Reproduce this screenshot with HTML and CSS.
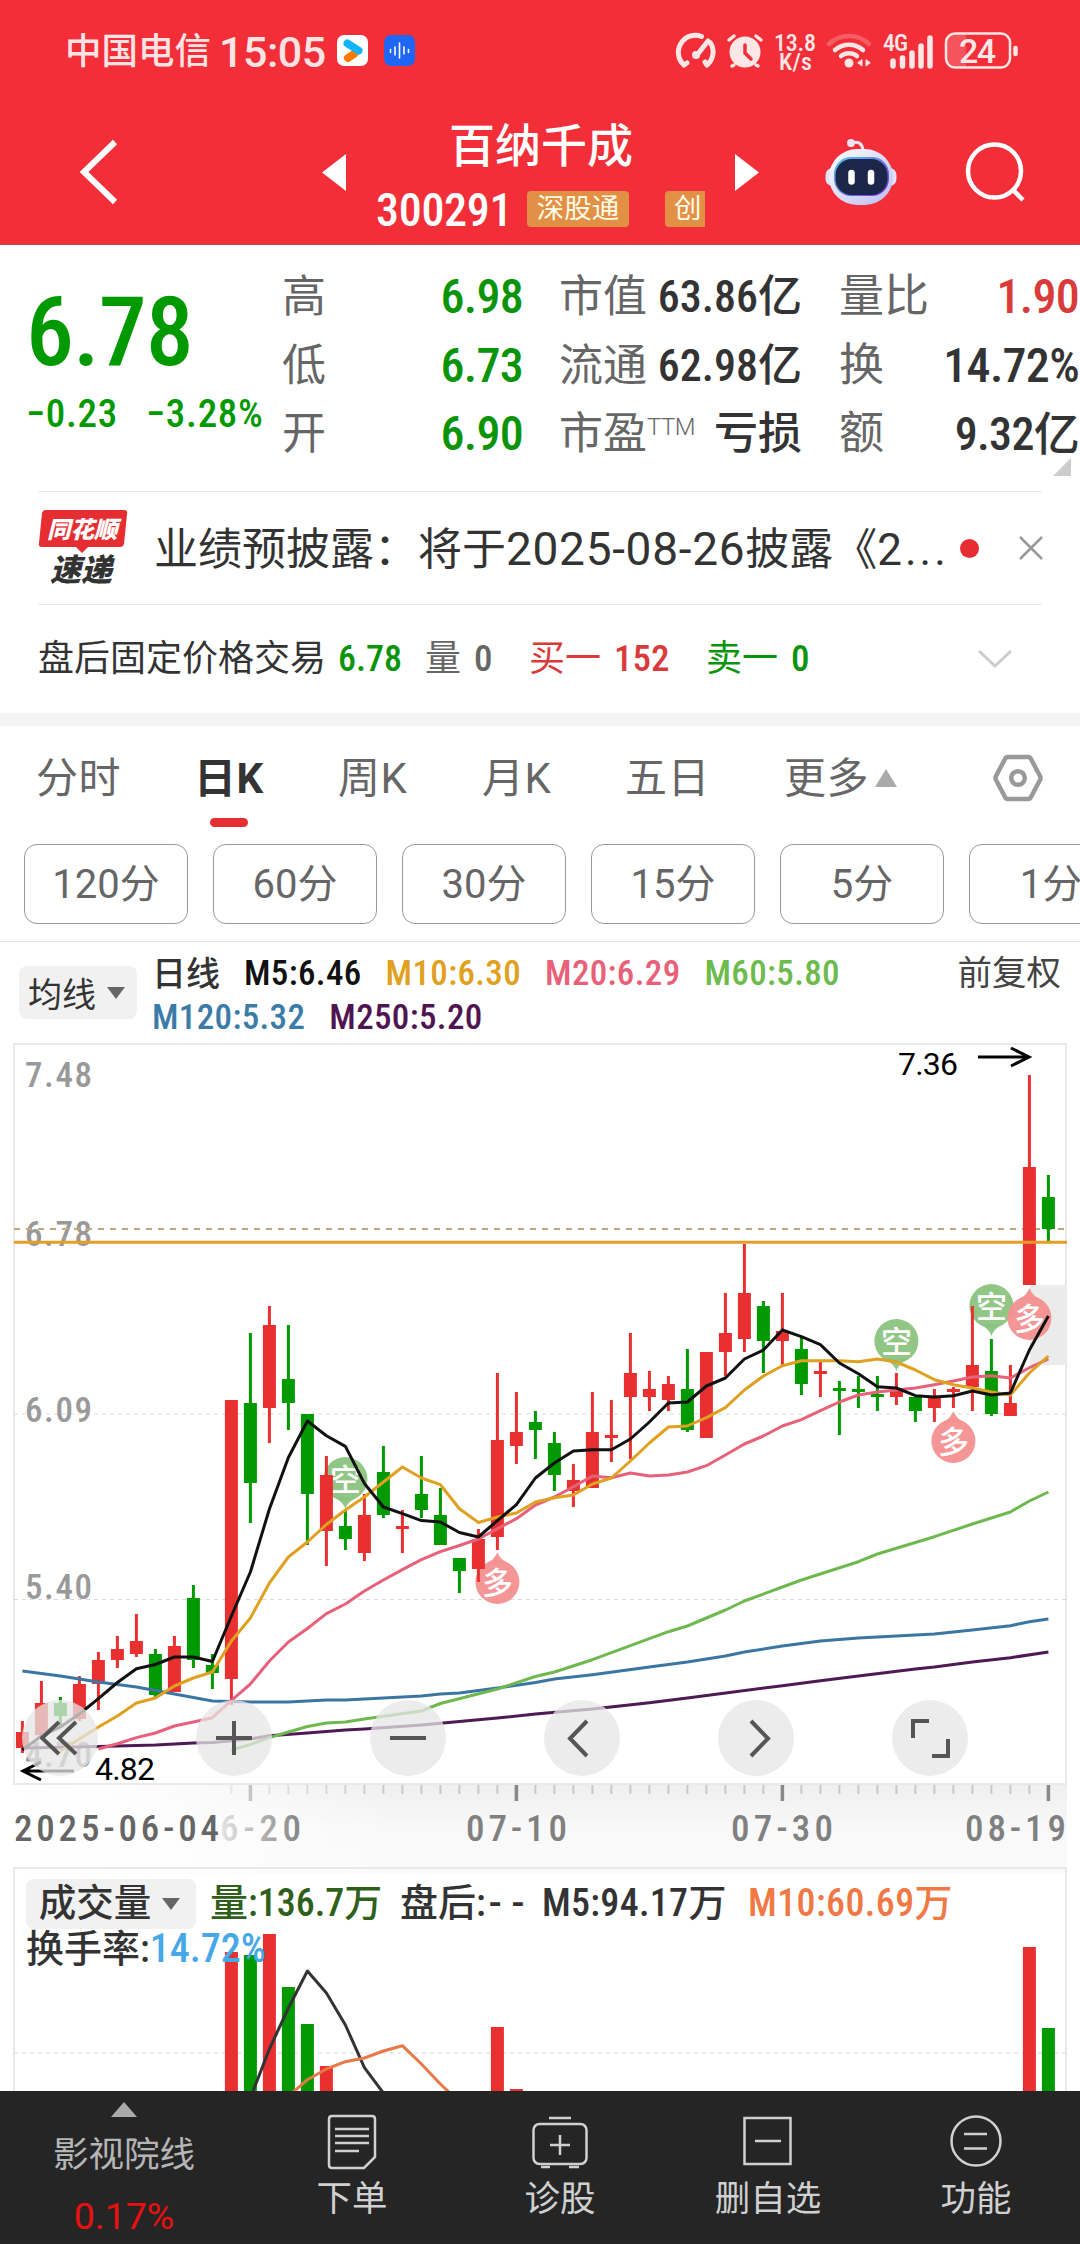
FILE: index.html
```html
<!DOCTYPE html>
<html lang="zh-CN">
<head>
    <meta charset="UTF-8">
    <meta name="viewport" content="width=device-width, initial-scale=1.0">
    <title>百纳千成 300291</title>
    <link rel="stylesheet" href="styles.css">
</head>
<body>
    <!-- Header -->
    <header class="header">
        <div class="status-bar">
            <span class="carrier">中国电信</span>
            <span class="clock">15:05</span>
            <svg class="app-icon" width="31" height="31" viewBox="0 0 31 31">
                <rect width="31" height="31" rx="7" fill="#fff"/>
                <path d="M11 23L17 19" stroke="#ff7a00" stroke-width="8" stroke-linecap="round"/>
                <path d="M10.500 8.500L21.500 15.500" stroke="#12b4fb" stroke-width="8" stroke-linecap="round"/>
            </svg>
            <svg class="app-icon" width="31" height="31" viewBox="0 0 31 31">
                <rect width="31" height="31" rx="7" fill="#1f66f5"/>
                <path d="M6.500 14.500v3M11 12v8M15.500 8v15M20 12v7M24.500 14.500v3" stroke="#fff" stroke-width="1.600" stroke-linecap="round"/>
            </svg>
            <svg class="status-icons" width="360" height="44" viewBox="670 28 360 44" fill="none" stroke="#fde6e6" stroke-width="5" stroke-linecap="round">
                <path d="M684 65A17 17 0 0 1 701.500 36.500M710.500 43A17 17 0 0 1 707 65M684 65l3-2M707 65l-2-3"/>
                <path d="M697 55L708 41"/>
                <circle cx="696" cy="55" r="4" fill="#fde6e6" stroke="none"/>
                <circle cx="745" cy="52" r="15.500" fill="#fde6e6" stroke="none"/>
                <path d="M729 40l5-4M761 40l-5-4M734 65l-2 1M756 65l2 1" stroke-width="3.500"/>
                <path d="M745 45v8l6 6" stroke="#f22f38" stroke-width="3.500"/>
                <text class="speed" x="774" y="51" textLength="42">13.8</text>
                <text class="speed" x="779" y="70" textLength="33">K/s</text>
                <path d="M829 44A29 29 0 0 1 869 44" stroke-opacity=".25" stroke-width="4.500"/>
                <path d="M835 50A21 21 0 0 1 863 50M841 56A13 13 0 0 1 857 56" stroke-width="4.500"/>
                <circle cx="849" cy="63" r="4.500" fill="#fde6e6" stroke="none"/>
                <path d="M862 60v6l-4-3zM866 60v6l4-3z" fill="#fde6e6" stroke-width="1"/>
                <text class="speed" x="883" y="51" textLength="25">4G</text>
                <path d="M893 61v5M902.500 58v8M912 53v13M921 46v20M930 38v28" stroke-width="5.500"/>
                <path d="M966 33.500v34h-11a9 9 0 0 1-9-9v-16a9 9 0 0 1 9-9z" fill="#fff" fill-opacity=".18" stroke="none"/>
                <rect x="946" y="33.500" width="64" height="34" rx="9" stroke-width="2.500"/>
                <path d="M1015.500 48v6" stroke-width="4.500"/>
                <text class="battery" x="959" y="63" textLength="37">24</text>
            </svg>
        </div>
        <div class="nav">
            <svg class="back" width="46" height="70" viewBox="76 136 46 70">
                <path d="M115 141L84 171L115 201" fill="none" stroke="#fff" stroke-width="6"/>
            </svg>
            <svg class="prev" width="24" height="37" viewBox="0 0 24 37"><path d="M24 0v37L0 18.500z" fill="#fff"/></svg>
            <div class="stock">
                <h1 class="stock-name">百纳千成</h1>
                <div class="stock-code">
                    <span class="code">300291</span>
                    <span class="tag">深股通</span>
                    <span class="tag tag-cut">创</span>
                </div>
            </div>
            <svg class="next" width="24" height="37" viewBox="0 0 24 37"><path d="M0 0v37L24 18.500z" fill="#fff"/></svg>
            <svg class="robot" width="74" height="70" viewBox="824 135 74 70">
                <defs>
                    <linearGradient id="shell" x1="0" y1="0" x2="1" y2="1">
                        <stop offset="0" stop-color="#fff"/>
                        <stop offset="1" stop-color="#b9bdf2"/>
                    </linearGradient>
                    <linearGradient id="visor" x1="0" y1="0" x2="1" y2="1">
                        <stop offset="0" stop-color="#53c8f0"/>
                        <stop offset="1" stop-color="#7a2ee0"/>
                    </linearGradient>
                </defs>
                <path d="M852 141c6-2 10 0 11 7" fill="none" stroke="#f3e3ef" stroke-width="3"/>
                <circle cx="851" cy="141" r="4" fill="#f3e3f3"/>
                <rect x="825.500" y="166" width="71" height="18" rx="7" fill="#dfe2fa"/>
                <rect x="829" y="147" width="64" height="56" rx="28" fill="url(#shell)"/>
                <rect x="834" y="155" width="55" height="39" rx="17" fill="url(#visor)"/>
                <rect x="835.500" y="157" width="52" height="36" rx="16" fill="#1c2648"/>
                <path d="M851.500 171v8.500M871 171v8.500" stroke="#fff" stroke-width="6.500" stroke-linecap="round"/>
            </svg>
            <svg class="search" width="64" height="64" viewBox="964 141 64 64" fill="none" stroke="#fff" stroke-width="4.500">
                <circle cx="994.500" cy="172" r="26.500"/>
                <path d="M1012 190L1023 201"/>
            </svg>
        </div>
    </header>

    <!-- Quote -->
    <section class="quote">
        <div class="price-box">
            <div class="price">6.78</div>
            <div class="change"><span>−0.23</span><span>−3.28%</span></div>
        </div>
        <dl class="stats stats-a">
            <dt>高</dt><dd class="down">6.98</dd>
            <dt>低</dt><dd class="down">6.73</dd>
            <dt>开</dt><dd class="down">6.90</dd>
        </dl>
        <dl class="stats stats-b">
            <dt>市值</dt><dd>63.86亿</dd>
            <dt>流通</dt><dd>62.98亿</dd>
            <dt>市盈<sup>TTM</sup></dt><dd>亏损</dd>
        </dl>
        <dl class="stats stats-c">
            <dt>量比</dt><dd class="up">1.90</dd>
            <dt>换</dt><dd>14.72%</dd>
            <dt>额</dt><dd>9.32亿</dd>
        </dl>
        <span class="corner"></span>
    </section>

    <!-- News -->
    <section class="news">
        <div class="news-logo">
            <svg width="90" height="46" viewBox="38 510 90 46">
                <path d="M46 511H124q4 0 3 4L124 545q-1 3-4 3H88L82 554L76 548H42q-4 0-3-4L42 514q1-3 4-3z" fill="#e62e32"/>
                <text class="logo-top" x="47" y="539">同花顺</text>
            </svg>
            <span class="logo-bottom">速递</span>
        </div>
        <div class="news-text">业绩预披露：将于<span class="news-date">2025-08-26</span>披露《<span class="news-cut">2...</span></div>
        <span class="dot"></span>
        <svg class="close" width="24" height="24" viewBox="0 0 24 24"><path d="M1 1L23 23M23 1L1 23" stroke="#999" stroke-width="2.500"/></svg>
    </section>

    <section class="after-hours">
        <span class="ah-title">盘后固定价格交易</span>
        <span class="ah-price num down">6.78</span>
        <span class="ah-vol">量 <b class="num">0</b></span>
        <span class="ah-buy up">买一 <b class="num">152</b></span>
        <span class="ah-sell down">卖一 <b class="num">0</b></span>
        <svg class="expand" width="36" height="20" viewBox="0 0 36 20"><path d="M2 2L18 17L34 2" fill="none" stroke="#ccc" stroke-width="3"/></svg>
    </section>

    <!-- Period tabs -->
    <nav class="tabs">
        <span class="tab">分时</span>
        <span class="tab active">日K</span>
        <span class="tab">周K</span>
        <span class="tab">月K</span>
        <span class="tab">五日</span>
        <span class="tab">更多<i class="tri-up"></i></span>
        <svg class="settings" width="50" height="48" viewBox="0 0 50 48" fill="none" stroke="#999" stroke-width="4.500" stroke-linejoin="round">
            <path d="M15 3H35Q37 3 38 5L47 22Q48 24 47 26L38 43Q37 45 35 45H15Q13 45 12 43L3 26Q2 24 3 22L12 5Q13 3 15 3z"/>
            <circle cx="25" cy="24" r="6.800"/>
        </svg>
    </nav>
    <div class="chips">
        <span class="chip">120分</span>
        <span class="chip">60分</span>
        <span class="chip">30分</span>
        <span class="chip">15分</span>
        <span class="chip">5分</span>
        <span class="chip">1分</span>
    </div>

    <!-- Moving averages -->
    <section class="legend">
        <button class="pick">均线<i class="tri-down"></i></button>
        <div class="ma-list">
            <span class="ma-name">日线</span>
            <span class="ma5">M5:6.46</span>
            <span class="ma10">M10:6.30</span>
            <span class="ma20">M20:6.29</span>
            <span class="ma60">M60:5.80</span>
            <span class="ma120">M120:5.32</span>
            <span class="ma250">M250:5.20</span>
        </div>
        <span class="adjust">前复权</span>
    </section>

    <!-- Charts, drawn by chart.js -->
    <main class="charts">
        <svg id="chart" width="1080" height="1051" viewBox="0 1040 1080 1051"></svg>
        <div class="chart-tools">
            <button class="tool"><svg width="40" height="40" viewBox="0 0 40 40"><path d="M19 4L2 20L19 36M36 4L19 20L36 36"/></svg></button>
            <button class="tool"><svg width="40" height="40" viewBox="0 0 40 40"><path d="M2 20H38M20 3V37"/></svg></button>
            <button class="tool"><svg width="40" height="40" viewBox="0 0 40 40"><path d="M2 20H38"/></svg></button>
            <button class="tool"><svg width="40" height="40" viewBox="0 0 40 40"><path d="M25 3L8 20.500L25 38"/></svg></button>
            <button class="tool"><svg width="40" height="40" viewBox="0 0 40 40"><path d="M15 3L32 20.500L15 38"/></svg></button>
            <button class="tool"><svg width="40" height="40" viewBox="0 0 40 40"><path d="M3 20V3H19M38 21V38H22"/></svg></button>
        </div>
        <div class="vol-legend">
            <button class="pick">成交量<i class="tri-down"></i></button>
            <span class="vol-now">量:136.7万</span>
            <span class="vol-after">盘后:<span class="dashes">--</span></span>
            <span class="vol-m5">M5:94.17万</span>
            <span class="vol-m10">M10:60.69万</span>
        </div>
        <div class="turnover">换手率:<span>14.72%</span></div>
    </main>

    <!-- Bottom bar -->
    <footer class="bottom-bar">
        <div class="sector">
            <i class="tri-up"></i>
            <span class="sector-name">影视院线</span>
            <span class="sector-pct">0.17%</span>
        </div>
        <div class="item">
            <svg width="56" height="58" viewBox="0 0 56 58">
                <path d="M8 2H48Q51 2 51 5V43L40 54H8Q5 54 5 51V5Q5 2 8 2z"/>
                <path d="M11 15H45M11 22H45M11 29H45M11 37H35"/>
            </svg>
            <span>下单</span>
        </div>
        <div class="item">
            <svg width="56" height="58" viewBox="0 0 56 58">
                <rect x="1.500" y="10" width="53" height="40" rx="6"/>
                <path d="M17 4H39M9 53H18M37 53H47M28 21V41M18 31H38"/>
            </svg>
            <span>诊股</span>
        </div>
        <div class="item">
            <svg width="56" height="58" viewBox="0 0 56 58">
                <rect x="4.500" y="4" width="46" height="46"/>
                <path d="M15 27H41"/>
            </svg>
            <span>删自选</span>
        </div>
        <div class="item">
            <svg width="56" height="58" viewBox="0 0 56 58">
                <circle cx="28" cy="27" r="24.500"/>
                <path d="M16 20H39M16 34.500H39"/>
            </svg>
            <span>功能</span>
        </div>
    </footer>
    <script src="chart.js"></script>
</body>
</html>
```
FILE: styles.css
```css
* {
    box-sizing: border-box;
}

body {
    margin: 0;
    width: 1080px;
    height: 2244px;
    overflow: hidden;
    background: #fff;
    color: #333;
    font-family: Roboto, "Noto Sans CJK SC", sans-serif;
}

svg {
    display: block;
    flex: none;
}

button {
    border: 0;
    padding: 0;
    font: inherit;
    color: inherit;
}

b {
    font-weight: 500;
}

.num {
    font-stretch: 75%;
    font-weight: 500;
}

.up {
    color: #d93a3a;
}

.down {
    color: #0a940a;
}

.tri-up,
.tri-down {
    display: block;
    border: 11px solid transparent;
    border-top: 0;
    border-bottom: 18px solid #aaa;
}

.tri-down {
    border: 9px solid transparent;
    border-bottom: 0;
    border-top: 12px solid #666;
}

/* header */
.header {
    height: 245px;
    background: #f22f38;
    color: #fff;
    border-bottom: 1px solid #b84a52;
}

.status-bar {
    display: flex;
    align-items: center;
    height: 100px;
    padding-left: 65px;
    color: #fde3e3;
    font-weight: 500;
}

.carrier {
    width: 154px;
    font-size: 36.500px;
    line-height: 50px;
    padding-top: 3px;
}

.clock {
    width: 118px;
    font-size: 43px;
    line-height: 50px;
    letter-spacing: -0.500px;
    padding-top: 3px;
}

.app-icon {
    margin-right: 16px;
}

.status-icons {
    margin-left: 239px;
}

.speed {
    font-size: 24px;
    font-weight: 500;
    font-stretch: 85%;
    fill: #fde6e6;
    stroke: none;
}

.battery {
    font-size: 34px;
    font-weight: 500;
    fill: #fde6e6;
    stroke: none;
}

.nav {
    display: flex;
    align-items: center;
    height: 144px;
}

.back {
    margin-left: 76px;
}

.prev {
    margin-left: 200px;
}

.stock {
    width: 363px;
    margin: 0 13px 0 13px;
    height: 144px;
}

.stock-name {
    margin: 13px 0 0 1px;
    font-size: 46px;
    line-height: 66px;
    font-weight: 500;
    text-align: center;
}

.stock-code {
    display: flex;
    align-items: center;
    height: 56px;
    padding: 4px 0 0 17px;
}

.code {
    width: 151px;
    padding-top: 2px;
    font-size: 46px;
    font-weight: 500;
    font-stretch: 75%;
    line-height: 46px;
    letter-spacing: -0.300px;
}

.tag {
    width: 102px;
    height: 36px;
    border-radius: 4px;
    background: #e39047;
    color: #fffbe6;
    font-size: 27.500px;
    line-height: 35px;
    text-align: center;
}

.tag-cut {
    width: 40px;
    margin-left: 36px;
    padding-left: 9px;
    border-radius: 4px 0 0 4px;
    text-align: left;
}

.robot {
    margin-left: 65px;
}

.search {
    margin-left: 66px;
}

/* quote */
.quote {
    position: relative;
    display: flex;
    height: 246px;
}

.price-box {
    width: 282px;
    padding: 31px 0 0 26px;
    color: #009a00;
    font-stretch: 75%;
    font-weight: 500;
}

.price {
    font-size: 96px;
    line-height: 112px;
    letter-spacing: -1px;
}

.change {
    display: flex;
    gap: 28px;
    font-size: 39px;
    line-height: 52px;
    letter-spacing: 0.700px;
    white-space: nowrap;
}

.stats {
    display: grid;
    grid-template-columns: 90px 1fr;
    grid-auto-rows: 68.500px;
    margin: 18px 0 0;
    line-height: 68px;
    white-space: nowrap;
}

.stats dt {
    font-size: 44px;
    color: #666;
}

.stats dd {
    margin: 0;
    font-size: 48px;
    font-weight: 500;
    font-stretch: 75%;
    text-align: right;
    letter-spacing: -0.700px;
}

.stats sup {
    font-size: 24px;
    font-weight: 300;
    line-height: 0;
    vertical-align: 14px;
    letter-spacing: -0.500px;
}

.stats-a {
    width: 241px;
}

.stats-b {
    width: 243px;
    margin-left: 36px;
}

.stats-b dd {
    font-size: 44px;
    letter-spacing: 0;
}

.stats-c {
    width: 240px;
    margin-left: 37px;
}

.stats-c dt {
    font-size: 45px;
}

.stats-c dd:last-child {
    font-size: 46px;
}

.corner {
    position: absolute;
    right: 9px;
    bottom: 15px;
    border-left: 18px solid transparent;
    border-bottom: 18px solid #ccc;
}

/* news */
.news {
    display: flex;
    align-items: center;
    height: 114px;
    margin: 0 38px;
    border-top: 1px solid #e8e8e8;
    border-bottom: 1px solid #e8e8e8;
}

.news-logo {
    flex: none;
    width: 116px;
    height: 78px;
}

.logo-top {
    font-size: 23.500px;
    font-weight: 900;
    font-style: italic;
    fill: #fff;
}

.logo-bottom {
    display: block;
    margin-left: 12px;
    font-size: 31px;
    line-height: 31px;
    font-weight: 900;
    font-style: italic;
}

.news-text {
    flex: none;
    width: 806px;
    padding-top: 2px;
    font-size: 44px;
    line-height: 60px;
    white-space: nowrap;
}

.news-date {
    font-size: 46px;
    letter-spacing: 0.700px;
}

.news-cut {
    letter-spacing: 3px;
}

.dot {
    flex: none;
    width: 19px;
    height: 19px;
    margin-right: 40px;
    border-radius: 50%;
    background: #e62e32;
}

.after-hours {
    display: flex;
    align-items: center;
    height: 108px;
    padding-left: 38px;
    font-size: 36px;
    white-space: nowrap;
}

.after-hours span {
    flex: none;
    line-height: 52px;
}

.after-hours b {
    margin-left: 4px;
    font-size: 37px;
}

.ah-title {
    width: 300px;
}

.ah-price {
    width: 87px;
}

.ah-vol {
    width: 104px;
    color: #666;
}

.ah-buy {
    width: 177px;
}

.ah-sell {
    width: 271px;
}

/* tabs */
.tabs {
    display: grid;
    grid-template-columns: 158px 144px 144px 143px 159px 209px 50px;
    align-items: center;
    height: 118px;
    border-top: 13px solid #f4f4f4;
    padding-left: 36px;
    color: #666;
    font-size: 42px;
}

.tab {
    position: relative;
    display: flex;
    align-items: center;
    line-height: 60px;
    letter-spacing: 0.500px;
}

.tab .tri-up {
    margin: 0 0 2px 6px;
}

.tab.active {
    color: #333;
    font-weight: 700;
}

.tab.active::after {
    content: "";
    position: absolute;
    left: 16px;
    bottom: -18px;
    width: 38px;
    height: 9px;
    border-radius: 5px;
    background: #e62e32;
}

.settings {
    margin-bottom: 2px;
}

.chips {
    display: flex;
    gap: 25px;
    height: 111px;
    padding: 13px 0 0 24px;
    border-bottom: 1px solid #e5e5e5;
    overflow: hidden;
}

.chip {
    flex: none;
    width: 164px;
    height: 80px;
    border: 1px solid #999;
    border-radius: 13px;
    color: #666;
    font-size: 40px;
    line-height: 80px;
    text-align: center;
}

/* legend */
.legend {
    display: flex;
    height: 98px;
    padding: 0 19px 0 19px;
}

.pick {
    display: flex;
    align-items: center;
    justify-content: center;
    gap: 11px;
    border-radius: 8px;
    background: #f1f1f1;
    color: #333;
    font-size: 34px;
}

.legend .pick {
    width: 118px;
    height: 53px;
    margin-top: 24px;
    padding-right: 3px;
}

.ma-list {
    display: flex;
    flex-wrap: wrap;
    column-gap: 24px;
    width: 790px;
    height: 98px;
    padding: 10px 0 0 15px;
    font-size: 35px;
    font-weight: 500;
    font-stretch: 75%;
    line-height: 44px;
    white-space: nowrap;
    letter-spacing: 0.350px;
}

.ma-name {
    font-size: 34px;
    letter-spacing: 0;
}

.ma5 {
    color: #111;
}

.ma10 {
    color: #e0a020;
}

.ma20 {
    color: #e86178;
}

.ma60 {
    color: #6cbb4c;
}

.ma120 {
    color: #3a7ba8;
}

.ma250 {
    color: #4f1452;
}

.adjust {
    margin-left: auto;
    padding-top: 9px;
    font-size: 34.500px;
    line-height: 44px;
    color: #444;
    white-space: nowrap;
}

/* charts */
.charts {
    position: relative;
    height: 1051px;
}

.axis-label {
    font-size: 35px;
    font-weight: 500;
    font-stretch: 82%;
    fill: #999;
}

.date-label {
    font-size: 37px;
    font-weight: 500;
    font-stretch: 85%;
    fill: #808080;
}

.peak-label {
    font-size: 32px;
    font-stretch: 90%;
    fill: #000;
}

.badge-text {
    font-size: 31px;
    font-weight: 500;
    fill: #fff;
    text-anchor: middle;
}

.chart-tools {
    position: absolute;
    left: 22px;
    top: 660px;
    display: flex;
    gap: 98px;
}

.tool {
    display: flex;
    align-items: center;
    justify-content: center;
    width: 76px;
    height: 76px;
    border-radius: 50%;
    background: rgba(230, 230, 230, 0.75);
}

.tool path {
    fill: none;
    stroke: #555;
    stroke-width: 4;
}

.vol-legend {
    position: absolute;
    left: 26px;
    top: 839px;
    display: flex;
    align-items: center;
    height: 49px;
    font-size: 38px;
    font-weight: 500;
    font-stretch: 75%;
    line-height: 49px;
    white-space: nowrap;
}

.vol-legend .pick {
    width: 170px;
    height: 50px;
    margin-right: 14px;
    padding-right: 3px;
    font-size: 37.500px;
}

.vol-now {
    width: 190px;
    color: #2f5f1a;
}

.vol-after {
    width: 142px;
}

.dashes {
    display: inline-block;
    font-stretch: 100%;
    letter-spacing: 10px;
    transform: translateX(3px);
}

.vol-m5 {
    width: 206px;
    letter-spacing: 0.300px;
}

.vol-m10 {
    color: #f07845;
    letter-spacing: 0.400px;
}

.turnover {
    position: absolute;
    left: 26px;
    top: 884px;
    font-size: 38px;
    font-weight: 500;
    font-stretch: 75%;
    line-height: 50px;
}

.turnover span {
    color: #47a8e8;
    font-size: 40px;
}

/* bottom bar */
.bottom-bar {
    display: flex;
    height: 153px;
    background: #252525;
    color: #d0d0d0;
}

.sector {
    display: flex;
    flex-direction: column;
    align-items: center;
    width: 248px;
    padding-top: 11px;
}

.sector .tri-up {
    border-width: 0 13px 15px;
}

.sector-name {
    margin-top: 12px;
    font-size: 35.500px;
    line-height: 52px;
    color: #b5b5b5;
}

.sector-pct {
    margin-top: 9px;
    font-size: 37.500px;
    line-height: 52px;
    color: #ea1010;
}

.item {
    display: flex;
    flex-direction: column;
    align-items: center;
    width: 208px;
    padding-top: 23px;
    font-size: 35.500px;
    line-height: 55px;
}

.item svg {
    fill: none;
    stroke: #d0d0d0;
    stroke-width: 2.500;
}
```
FILE: chart.js
```js
var X0 = 22.4;
var STEP = 19;

// color, high, body top, body bottom, low
var candles = [
    ['r', 1721, 1732, 1748, 1753], ['r', 1681, 1703, 1735, 1735], ['g', 1697, 1703, 1716, 1727],
    ['r', 1676, 1684, 1719, 1721], ['r', 1652, 1660, 1684, 1710], ['r', 1636, 1649, 1660, 1668],
    ['r', 1614, 1641, 1654, 1657], ['g', 1649, 1654, 1695, 1699], ['r', 1636, 1646, 1692, 1692],
    ['g', 1585, 1598, 1660, 1668], ['g', 1654, 1665, 1673, 1689], ['r', 1400, 1400, 1679, 1705],
    ['g', 1333, 1403, 1483, 1523], ['r', 1306, 1325, 1408, 1443], ['g', 1325, 1379, 1403, 1430],
    ['g', 1414, 1414, 1494, 1545], ['r', 1456, 1475, 1531, 1566], ['g', 1511, 1526, 1539, 1550],
    ['r', 1494, 1515, 1553, 1561], ['g', 1446, 1472, 1515, 1518], ['r', 1510, 1526, 1529, 1553],
    ['g', 1456, 1494, 1510, 1518], ['g', 1488, 1515, 1545, 1545], ['g', 1558, 1558, 1571, 1593],
    ['r', 1529, 1539, 1569, 1582], ['r', 1373, 1440, 1537, 1550], ['r', 1392, 1432, 1446, 1464],
    ['g', 1411, 1422, 1430, 1459], ['g', 1432, 1443, 1475, 1491], ['r', 1464, 1480, 1491, 1507],
    ['r', 1392, 1432, 1488, 1488], ['r', 1400, 1435, 1438, 1462], ['r', 1333, 1373, 1397, 1459],
    ['r', 1371, 1389, 1397, 1411], ['r', 1376, 1384, 1400, 1411], ['g', 1349, 1389, 1430, 1432],
    ['r', 1352, 1352, 1438, 1438], ['r', 1293, 1333, 1352, 1376], ['r', 1244, 1293, 1339, 1352],
    ['g', 1301, 1306, 1341, 1373], ['r', 1293, 1331, 1341, 1365], ['g', 1337, 1349, 1384, 1395],
    ['r', 1362, 1371, 1374, 1397], ['g', 1381, 1388, 1391, 1435], ['g', 1376, 1389, 1392, 1408],
    ['g', 1376, 1394, 1397, 1411], ['r', 1373, 1390, 1397, 1405], ['g', 1397, 1397, 1411, 1422],
    ['r', 1389, 1397, 1408, 1422], ['r', 1387, 1389, 1392, 1408], ['r', 1306, 1365, 1387, 1411],
    ['g', 1339, 1371, 1414, 1416], ['r', 1365, 1403, 1416, 1416], ['r', 1075, 1167, 1285, 1285],
    ['g', 1175, 1197, 1229, 1241]
];

// [index, y] points
var ma120 = [[0, 1671], [2, 1676], [4, 1682], [6, 1687], [8, 1694], [10, 1701], [12, 1702], [14, 1702], [16, 1700], [17, 1700], [19, 1698], [21, 1696], [22, 1694], [23, 1693], [25, 1688], [27, 1682.5], [28, 1679], [30, 1674.7], [33, 1667], [35, 1662], [37, 1656], [38, 1652], [40, 1646], [42, 1641], [44, 1638], [48, 1634], [50, 1630], [52, 1625.7], [53, 1621.7], [54, 1619]];
var ma250 = [[0, 1748], [4, 1746.5], [7, 1745], [9, 1743], [10, 1742.6], [12, 1739], [13, 1735.7], [15, 1733], [17, 1730], [18, 1729], [21, 1725], [23, 1721.5], [25, 1718], [27, 1714], [30, 1709], [33, 1702.7], [35, 1698], [40, 1685.7], [42, 1680.7], [44, 1676], [47, 1669], [48, 1667], [50, 1662], [52, 1657.7], [54, 1652]];
var ma60 = [[11, 1750], [12, 1744.5], [13, 1737.6], [14, 1732], [15, 1726.5], [16, 1723], [17, 1722], [18, 1719], [21, 1711], [22, 1703.5], [25, 1689], [27, 1676.5], [28, 1672], [30, 1659.7], [34, 1631.7], [35, 1626], [37, 1610], [38, 1601], [40, 1587], [41, 1580], [44, 1561.7], [45, 1554], [48, 1536.7], [50, 1524], [52, 1512], [53, 1501], [54, 1492]];
// one value a day, from the given index
var ma5 = series(0, [1750, 1736, 1727, 1714, 1698.6, 1682.5, 1668.7, 1664.5, 1657, 1657, 1661.5, 1616, 1572, 1509, 1457.5, 1421, 1435.7, 1446.4, 1483.5, 1507, 1513.7, 1520.6, 1522, 1532.5, 1537, 1520.6, 1504.6, 1478, 1463, 1451, 1449.7, 1449.7, 1439, 1422, 1403, 1402, 1386, 1378, 1359, 1350, 1330, 1336.7, 1344.7, 1363, 1373.7, 1386.7, 1388, 1395.7, 1397, 1395.7, 1391, 1395, 1393, 1350, 1316]);
var ma10 = series(2, [1751, 1739, 1727, 1716, 1703, 1698, 1686, 1678, 1672, 1641, 1618, 1583, 1557, 1542, 1524.5, 1510, 1497, 1482, 1467, 1478, 1484.7, 1508.8, 1522.5, 1517, 1513, 1502, 1497.7, 1495, 1484, 1478, 1461, 1443, 1427, 1426, 1417.7, 1407.7, 1390, 1376, 1365.7, 1360.7, 1360.7, 1360.7, 1361.7, 1359, 1362, 1370, 1379.7, 1384.7, 1388, 1392, 1395, 1373, 1356]);
var ma20 = series(4, [1749, 1743.7, 1737.6, 1733, 1726, 1722, 1717.7, 1700.5, 1684, 1661, 1642, 1628.5, 1613.6, 1604, 1591, 1580, 1569.6, 1559.7, 1551.6, 1545.5, 1539, 1528.7, 1518.7, 1505, 1497, 1486.7, 1476, 1477.7, 1473, 1476, 1475, 1472, 1465.7, 1455, 1444, 1436, 1426, 1419.7, 1410.7, 1402, 1395, 1392, 1390, 1388, 1384.7, 1381, 1377, 1375.7, 1378, 1367.7, 1359]);

var volumes = [[11, 'r', 1952], [12, 'g', 1955], [13, 'r', 1934], [14, 'g', 1987], [15, 'g', 2024], [16, 'r', 2066], [25, 'r', 2027], [26, 'r', 2089], [53, 'r', 1947], [54, 'g', 2028]];
var volMa5 = [[12.1, 2093], [13, 2049], [14, 2008], [15, 1971], [16, 1993], [17, 2025], [18, 2067.7], [19, 2093]];
var volMa10 = [[14.2, 2093], [15, 2079.7], [16, 2069], [17, 2061.7], [18, 2058], [19, 2051], [20, 2045.7], [21, 2064], [22, 2084], [22.5, 2093]];

// type, index, circle center y
var badges = [['空', 17, 1479], ['空', 46, 1341], ['空', 51, 1306], ['多', 25, 1582], ['多', 49, 1441], ['多', 53, 1318]];

function series(start, list) {
    return list.map(function (y, i) { return [start + i, y]; });
}
function px(i) {
    return X0 + i * STEP;
}
function rect(x, y, w, h, fill) {
    return '<rect x="' + x + '" y="' + y + '" width="' + w + '" height="' + h + '" fill="' + fill + '"/>';
}
function line(x1, y1, x2, y2, color, w, dash) {
    return '<path d="M' + x1 + ' ' + y1 + 'L' + x2 + ' ' + y2 + '" stroke="' + color + '" stroke-width="' + w + '"' +
        (dash ? ' stroke-dasharray="' + dash + '"' : '') + '/>';
}
function curve(points, color) {
    var d = points.map(function (p) { return px(p[0]).toFixed(1) + ',' + p[1]; }).join(' ');
    return '<polyline points="' + d + '" fill="none" stroke="' + color + '" stroke-width="3" stroke-linejoin="round"/>';
}
function label(cls, x, y, len, text, extra) {
    return '<text class="' + cls + '" x="' + x + '" y="' + y + '" textLength="' + len + '" ' + (extra || '') + '>' + text + '</text>';
}
function color(c) {
    return c === 'r' ? '#e83030' : '#009a00';
}

var out = '<defs>' +
    '<linearGradient id="axisBg" x1="0" x2="0" y1="0" y2="1"><stop offset="0" stop-color="#efefef"/><stop offset=".5" stop-color="#f9f9f9"/><stop offset="1" stop-color="#fafafa"/></linearGradient>' +
    '<linearGradient id="axisFade" x1="0" x2="1" y1="0" y2="0"><stop offset="0" stop-color="#fff"/><stop offset=".35" stop-color="#fff" stop-opacity=".85"/><stop offset="1" stop-color="#fff" stop-opacity="0"/></linearGradient>' +
    '<linearGradient id="dateFade" gradientUnits="userSpaceOnUse" x1="215" x2="305" y1="0" y2="0"><stop offset="0" stop-color="#808080" stop-opacity=".15"/><stop offset="1" stop-color="#808080"/></linearGradient>' +
    '</defs>';

// date axis
out += rect(14, 1785, 1053, 89, 'url(#axisBg)');
for (var t = 11; t < 55; t++) {
    var major = t === 12 || t === 26 || t === 40 || t === 54;
    out += line(px(t), 1785, px(t), major ? 1801 : 1794, major ? '#888' : '#c8c8c8', major ? 3.5 : 2);
}
out += rect(14, 1785, 386, 89, 'url(#axisFade)');
out += label('date-label', 220, 1841, 81, '6-20', 'style="fill:url(#dateFade)"');
out += label('date-label', 14, 1841, 205, '2025-06-04', 'style="fill:#666"');
out += label('date-label', 466, 1841, 101, '07-10');
out += label('date-label', 731, 1841, 102, '07-30');
out += label('date-label', 965, 1841, 101, '08-19');

// frames and grid
out += '<rect x="14" y="1044" width="1052" height="740" fill="none" stroke="#e9e9e9" stroke-width="2"/>';
out += rect(15, 1874, 1050, 220, '#fff');
out += '<rect x="14" y="1868" width="1052" height="400" fill="none" stroke="#e9e9e9" stroke-width="2"/>';
out += rect(1030, 1285, 37, 80, '#ebebeb');
out += line(14, 1414, 1066, 1414, '#e6e6e6', 1.5, '4 4');
out += line(14, 1599.5, 1066, 1599.5, '#d8d8d8', 1, '4 4');
out += line(14, 2053, 1066, 2053, '#e6e6e6', 1.5, '4 4');
out += label('axis-label', 25, 1087, 67, '7.48');
out += label('axis-label', 25, 1246, 67, '6.78');
out += label('axis-label', 25, 1422, 67, '6.09');
out += label('axis-label', 25, 1599, 67, '5.40');
out += label('axis-label', 25, 1767, 67, '4.70');
out += line(14, 1229, 1066, 1229, '#c0a878', 2, '6 6');

badges.forEach(function (b) {
    var x = px(b[1]), y = b[2], up = b[0] === '多', s = up ? -1 : 1;
    var fill = up ? '#f49090' : '#8bc37f';
    out += '<g fill="' + fill + '" fill-opacity=".95"><circle cx="' + x + '" cy="' + y + '" r="22"/>' +
        '<path d="M' + (x - 12) + ' ' + (y + s * 18) + 'Q' + (x - 2) + ' ' + (y + s * 23) + ' ' + x + ' ' + (y + s * 30) +
        'Q' + (x + 2) + ' ' + (y + s * 23) + ' ' + (x + 12) + ' ' + (y + s * 18) + 'z"/></g>' +
        '<text class="badge-text" x="' + x + '" y="' + (y + 12) + '">' + b[0] + '</text>';
});

candles.forEach(function (c, i) {
    var x = px(i);
    out += rect(x - 1.5, c[1], 3, c[4] - c[1], color(c[0]));
    out += rect(x - 6.5, c[2], 13, c[3] - c[2], color(c[0]));
});
volumes.forEach(function (v) {
    out += rect(px(v[0]) - 6.5, v[2], 13, 2100 - v[2], color(v[1]));
});

out += line(14, 1242.3, 1067, 1242.3, '#e69c28', 3);
out += curve(ma250, '#4f1a54') + curve(ma120, '#3b76a3') + curve(ma60, '#6fb84f');
out += curve(ma20, '#e8617a') + curve(ma10, '#e0a020') + curve(ma5, '#111');
out += curve(volMa5, '#333') + curve(volMa10, '#e87848');

// highest and lowest price
out += label('peak-label', 898, 1075, 60, '7.36');
out += '<path d="M978 1057H1028M1011 1048L1029 1057L1011 1066" fill="none" stroke="#000" stroke-width="3"/>';
out += label('peak-label', 95, 1780, 60, '4.82');
out += '<path d="M74 1771H24M41 1762L23 1771L41 1780" fill="none" stroke="#000" stroke-width="3"/>';

document.getElementById('chart').innerHTML = out;
```
